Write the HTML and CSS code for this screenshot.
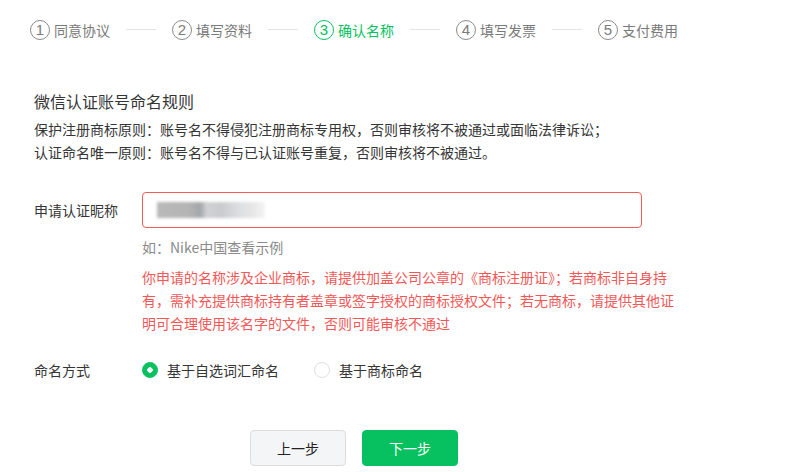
FILE: index.html
```html
<!DOCTYPE html>
<html lang="zh-CN">
<head>
<meta charset="utf-8">
<title>确认名称</title>
<link rel="stylesheet" href="styles.css">
</head>
<body>
<div class="steps">
  <div class="step"><span class="num">1</span><span class="label">同意协议</span></div>
  <span class="sep"></span>
  <div class="step"><span class="num">2</span><span class="label">填写资料</span></div>
  <span class="sep"></span>
  <div class="step active"><span class="num">3</span><span class="label">确认名称</span></div>
  <span class="sep"></span>
  <div class="step"><span class="num">4</span><span class="label">填写发票</span></div>
  <span class="sep"></span>
  <div class="step"><span class="num">5</span><span class="label">支付费用</span></div>
</div>

<div class="content">
  <h2 class="title">微信认证账号命名规则</h2>
  <p class="rules">保护注册商标原则：账号名不得侵犯注册商标专用权，否则审核将不被通过或面临法律诉讼；<br>认证命名唯一原则：账号名不得与已认证账号重复，否则审核将不被通过。</p>

  <div class="row">
    <div class="field-label">申请认证昵称</div>
    <div class="field">
      <div class="input"><span class="blur"></span></div>
      <div class="hint">如：Nike中国查看示例</div>
      <div class="warn">你申请的名称涉及企业商标，请提供加盖公司公章的《商标注册证》；若商标非自身持<br>有，需补充提供商标持有者盖章或签字授权的商标授权文件；若无商标，请提供其他证<br>明可合理使用该名字的文件，否则可能审核不通过</div>
    </div>
  </div>

  <div class="row radio-row">
    <div class="field-label">命名方式</div>
    <div class="radios">
      <label class="radio"><span class="dot checked"></span>基于自选词汇命名</label>
      <label class="radio"><span class="dot"></span>基于商标命名</label>
    </div>
  </div>

  <div class="actions">
    <button class="btn btn-default">上一步</button>
    <button class="btn btn-primary">下一步</button>
  </div>
</div>
</body>
</html>
```

FILE: styles.css
```css
* { box-sizing: border-box; }
html, body { margin: 0; padding: 0; background: #fff; }
body {
  font-family: "Noto Sans CJK SC", "Microsoft YaHei", sans-serif;
  color: #353535;
  font-size: 14px;
}

.steps {
  display: flex;
  align-items: center;
  padding: 19px 0 0 30px;
  height: 40px;
}
.step {
  display: flex;
  align-items: center;
  gap: 4px;
  color: #7a7a7a;
  font-size: 14px;
  line-height: 20px;
}
.step .num {
  width: 20px;
  height: 20px;
  border: 1px solid #8a8a8a;
  border-radius: 50%;
  display: flex;
  align-items: center;
  justify-content: center;
  font-family: "Liberation Sans", "Noto Sans", sans-serif;
  font-size: 15px;
  line-height: 1;
  color: #7a7a7a;
}
.step.active, .step.active .num { color: #07c160; border-color: #07c160; }
.sep {
  width: 30px;
  height: 1px;
  background: #e3e3e3;
  margin: 0 16px;
}

.content { padding-left: 34px; }

.title {
  margin: 50px 0 0;
  font-size: 16px;
  font-weight: normal;
  line-height: 22px;
  color: #353535;
}
.rules {
  margin: 6px 0 0;
  font-size: 14px;
  line-height: 23px;
}

.row { display: flex; }
.field-label {
  width: 108px;
  flex: none;
  font-size: 14px;
  line-height: 36px;
}
.content > .row { margin-top: 28px; }
.field { width: 580px; }
.input {
  width: 500px;
  height: 36px;
  border: 1px solid #f35b5b;
  border-radius: 4px;
  display: flex;
  align-items: center;
  padding-left: 14px;
}
.blur {
  display: inline-block;
  width: 108px;
  height: 16px;
  background: linear-gradient(90deg, #b9b9b9 0, #b4b4b4 30%, #a2a6aa 40%, #d0d1d4 46%, #c9cbce 60%, #dcdde0 75%, #e8e8e8 90%, #f4f4f4 100%);
  filter: blur(1.5px);
}
.hint {
  margin-top: 9px;
  color: #8a8a8a;
  line-height: 20px;
}
.warn {
  margin-top: 9px;
  color: #f25757;
  line-height: 23px;
  white-space: nowrap;
}

.content > .radio-row { margin-top: 25px; }
.radio-row .field-label { line-height: 20px; }
.radios { display: flex; align-items: center; gap: 35px; }
.radio {
  display: flex;
  align-items: center;
  gap: 9px;
  line-height: 20px;
  color: #353535;
}
.dot {
  width: 16px;
  height: 16px;
  border-radius: 50%;
  border: 1px solid #e1e1e1;
  background: #fff;
  display: inline-block;
}
.dot.checked {
  border-color: #07c160;
  background: radial-gradient(circle, #fff 0, #fff 2.5px, #07c160 3px);
}

.actions {
  display: flex;
  gap: 16px;
  margin: 50px 0 0 216px;
}
.btn {
  width: 96px;
  height: 36px;
  border-radius: 4px;
  font-family: inherit;
  font-size: 14px;
  cursor: pointer;
}
.btn-default {
  background: #f4f5f7;
  border: 1px solid #dcdcdc;
  color: #222;
}
.btn-primary {
  background: #07c160;
  border: 1px solid #07c160;
  color: #fff;
}
```
